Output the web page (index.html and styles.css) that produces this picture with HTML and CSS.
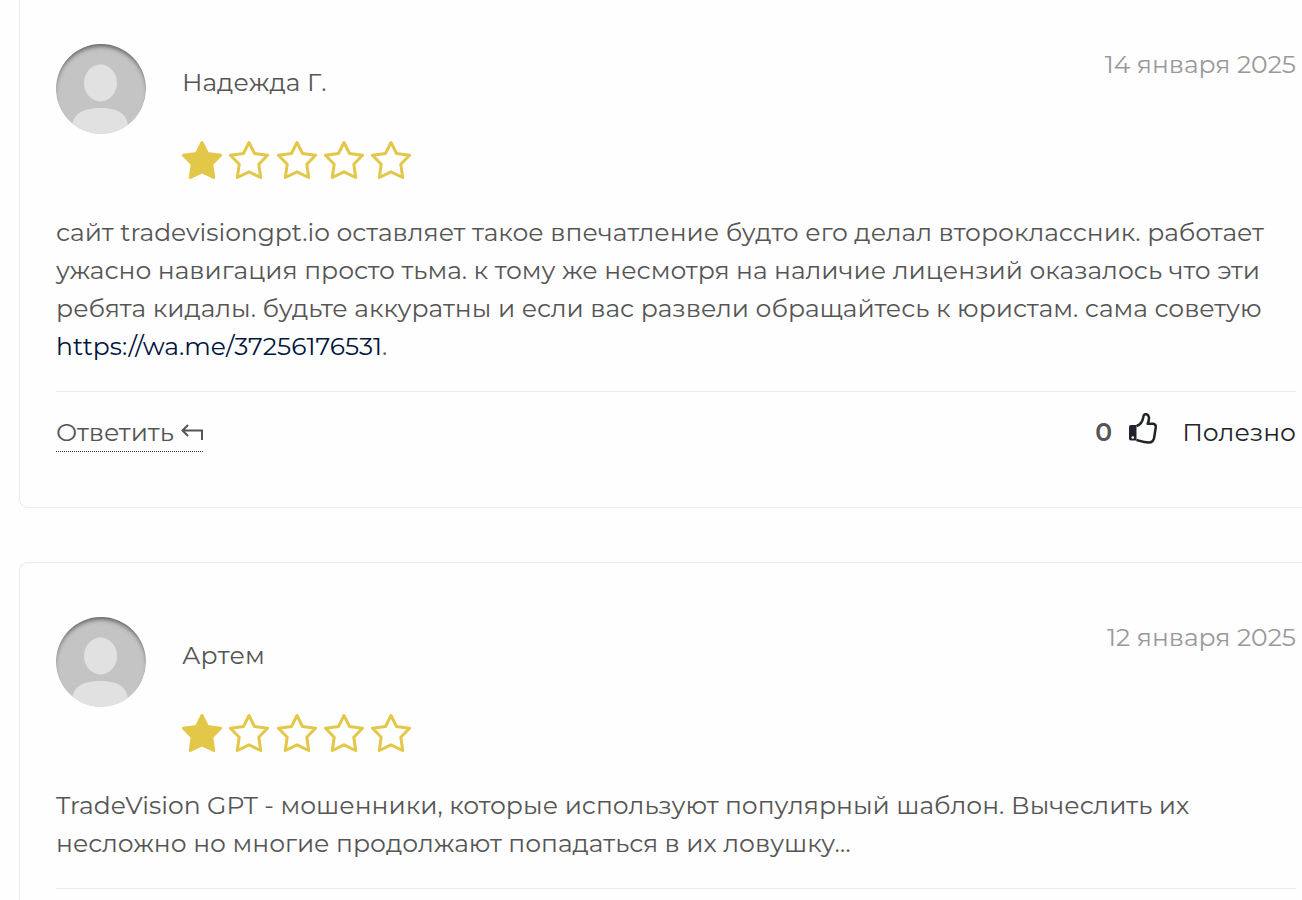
FILE: index.html
```html
<!DOCTYPE html>
<html lang="ru">
<head>
<meta charset="utf-8">
<meta name="viewport" content="width=device-width, initial-scale=1">
<title>Отзывы</title>
<link rel="stylesheet" href="styles.css">
</head>
<body>
<svg class="defs" aria-hidden="true">
  <defs>
    <clipPath id="disc"><circle cx="45" cy="45" r="45"/></clipPath>
    <filter id="soft" x="-20%" y="-20%" width="140%" height="140%"><feGaussianBlur stdDeviation="2.5"/></filter>
    <symbol id="avatar" viewBox="0 0 90 90">
      <g clip-path="url(#disc)">
        <circle cx="45" cy="45" r="45" fill="#c4c4c4"/>
        <path d="M16 84C16 70 27 64 44.500 64S72 70 72 84V92H16Z" fill="#e1e1e1"/>
        <ellipse cx="44.500" cy="39" rx="16.500" ry="18.500" fill="#e1e1e1"/>
        <path fill-rule="evenodd" d="M-10-10H100V110H-10ZM-2 50a47 48 0 1 0 94 0a47 48 0 1 0-94 0Z" fill="#555" filter="url(#soft)"/>
      </g>
    </symbol>
    <symbol id="star" viewBox="0 0 40 40">
      <path d="M20 2.500L25.500 13.500L38.500 15.200L29.800 24.200L31.700 37.500L20 31.800L8.300 37.500L10.200 24.200L1.500 15.200L14.500 13.500Z" stroke="#e2c748" stroke-width="3" stroke-linejoin="round"/>
    </symbol>
  </defs>
</svg>
<main class="reviews">
  <article class="review review-first">
    <header class="head">
      <svg class="avatar" role="img" aria-label="Надежда Г."><use href="#avatar"/></svg>
      <div class="author">
        <span class="name">Надежда Г.</span>
        <div class="stars" role="img" aria-label="1 из 5">
          <svg class="star full"><use href="#star"/></svg>
          <svg class="star"><use href="#star"/></svg>
          <svg class="star"><use href="#star"/></svg>
          <svg class="star"><use href="#star"/></svg>
          <svg class="star"><use href="#star"/></svg>
        </div>
      </div>
      <time class="date" datetime="2025-01-14">14 января 2025</time>
    </header>
    <p class="text">сайт tradevisiongpt.io оставляет такое впечатление будто его делал второклассник. работает<br>ужасно навигация просто тьма. к тому же несмотря на наличие лицензий оказалось что эти<br>ребята кидалы. будьте аккуратны и если вас развели обращайтесь к юристам. сама советую<br><a class="link" href="https://wa.me/37256176531">https://wa.me/37256176531</a>.</p>
    <footer class="actions">
      <button class="reply" type="button">Ответить
        <svg class="reply-icon" viewBox="0 0 22 18" aria-hidden="true"><path d="M7 2L1.500 7.500L7 13M1.500 7.500H21V17" fill="none" stroke="currentColor" stroke-width="2"/></svg>
      </button>
      <div class="votes">
        <span class="count">0</span>
        <button class="useful" type="button">
          <svg class="thumb" viewBox="0 0 28 31" aria-hidden="true">
            <path d="M7.500 13C11 12 13.500 8.500 14.200 4.500C14.600 1.200 16 .9 17.500 1.300C20.300 2.300 20.800 5.500 18.700 10.800H23.500C26 10.800 27.200 12.300 26.700 14.500L25.200 24.500C24.600 28 22.800 29.500 19.800 29.500C15 29.500 12 28.300 7.500 27" fill="none" stroke="currentColor" stroke-width="2.500" stroke-linejoin="round"/>
            <path d="M2 12H7.500V27.500H2Q0 27.500 0 25.500V14Q0 12 2 12Z" fill="currentColor"/>
            <circle cx="3.800" cy="24.500" r="1.300" fill="#fefefe"/>
          </svg>
          <span>Полезно</span>
        </button>
      </div>
    </footer>
  </article>
  <article class="review review-last">
    <header class="head">
      <svg class="avatar" role="img" aria-label="Артем"><use href="#avatar"/></svg>
      <div class="author">
        <span class="name">Артем</span>
        <div class="stars" role="img" aria-label="1 из 5">
          <svg class="star full"><use href="#star"/></svg>
          <svg class="star"><use href="#star"/></svg>
          <svg class="star"><use href="#star"/></svg>
          <svg class="star"><use href="#star"/></svg>
          <svg class="star"><use href="#star"/></svg>
        </div>
      </div>
      <time class="date" datetime="2025-01-12">12 января 2025</time>
    </header>
    <p class="text">TradeVision GPT - мошенники, которые используют популярный шаблон. Вычеслить их<br>несложно но многие продолжают попадаться в их ловушку…</p>
    <footer class="actions"></footer>
  </article>
</main>
</body>
</html>
```
FILE: styles.css
```css
* {
  box-sizing: border-box;
}

body {
  margin: 0;
  background: #fefefe;
  color: #555;
  font-family: Montserrat, Inter, "Noto Sans", sans-serif;
  font-size: 25px;
  line-height: 38px;
}

.defs {
  position: absolute;
  width: 0;
  height: 0;
}

.reviews {
  display: flex;
  flex-direction: column;
  gap: 54px;
  height: 100vh;
  padding-left: 19px;
  overflow: hidden;
}

.review {
  flex: none;
  padding: 54px 6px 55px 36px;
  border: 1px solid #ebebeb;
  border-right: 0;
  border-radius: 9px 0 0 9px;
}

.review-first {
  padding-top: 44px;
  border-top: 0;
  border-top-left-radius: 0;
}

.review-last {
  flex: 1 0 auto;
  padding-bottom: 0;
  border-bottom: 0;
  border-bottom-left-radius: 0;
}

.head {
  display: flex;
  align-items: flex-start;
  gap: 36px;
}

.avatar {
  flex: none;
  width: 90px;
  height: 90px;
}

.author {
  flex: 1;
  padding-top: 19px;
}

.name {
  display: block;
  font-kerning: none;
}

.stars {
  display: flex;
  justify-content: space-between;
  width: 229px;
  margin-top: 39px;
}

.star {
  width: 40px;
  height: 40px;
  fill: none;
}

.full {
  fill: #e2c748;
}

.date {
  padding-top: 1px;
  color: #999;
}

.text {
  margin: 33px 0 26px;
  white-space: nowrap;
}

.link {
  color: #001540;
  text-decoration: none;
}

.actions {
  display: flex;
  justify-content: space-between;
  padding-top: 21px;
  border-top: 1px solid #ebebeb;
}

button {
  padding: 0;
  border: 0;
  background: none;
  font: inherit;
  cursor: pointer;
}

.reply {
  display: flex;
  align-items: center;
  gap: 7px;
  border-bottom: 1px dotted #333;
  color: #555;
}

.reply-icon {
  width: 22px;
  height: 18px;
}

.votes {
  display: flex;
  gap: 17px;
}

.count {
  font-weight: 600;
}

.useful {
  display: flex;
  gap: 25px;
  color: #212529;
}

.thumb {
  width: 28px;
  height: 31px;
}
```
